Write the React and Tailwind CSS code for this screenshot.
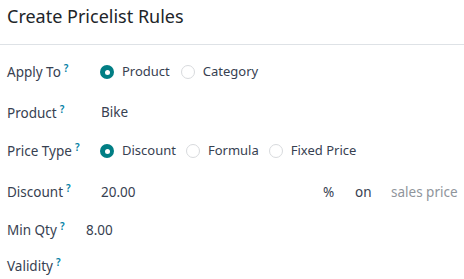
import React from "react";

function Q() {
  return <span className="ml-[3px] text-[10px] leading-[12px] font-semibold text-[#0180a5]">?</span>;
}

function Label({ w, children }) {
  return (
    <div className={`${w} shrink-0 flex items-start`}>
      <span className="leading-[20px]">{children}</span>
      <Q />
    </div>
  );
}

function Radio({ checked, label }) {
  return (
    <div className="flex items-center">
      {checked ? (
        <span className="w-[14px] h-[14px] rounded-full bg-[#017e84] flex items-center justify-center">
          <span className="w-[5px] h-[5px] rounded-full bg-white" />
        </span>
      ) : (
        <span className="w-[14px] h-[14px] rounded-full border border-[#d8dadd] bg-white" />
      )}
      <span className="ml-[8px] text-[13px]">{label}</span>
    </div>
  );
}

export default function App() {
  return (
    <div className="w-[464px] h-[279px] bg-white text-[#374151] text-[13.5px] overflow-hidden" style={{ fontFamily: '"Noto Sans", sans-serif' }}>
      <div className="h-[45px] border-b border-[#dee2e6] pl-[7px] pt-[4px] flex items-start">
        <h1 className="text-[18px] text-[#212529] leading-[24px]">Create Pricelist Rules</h1>
      </div>
      <div className="pl-[7px] pt-[7px]">
        <div className="flex items-center h-[40px]">
          <Label w="w-[93px]">Apply To</Label>
          <div className="flex items-center gap-[11px]">
            <Radio checked label="Product" />
            <Radio label="Category" />
          </div>
        </div>
        <div className="flex items-center h-[41px]">
          <Label w="w-[94px]">Product</Label>
          <span>Bike</span>
        </div>
        <div className="flex items-center h-[36px]">
          <Label w="w-[93px]">Price Type</Label>
          <div className="flex items-center gap-[10px]">
            <Radio checked label="Discount" />
            <Radio label="Formula" />
            <Radio label="Fixed Price" />
          </div>
        </div>
        <div className="flex items-center h-[46px]">
          <Label w="w-[94px]">Discount</Label>
          <span className="w-[222px]">20.00</span>
          <span className="w-[32px]">%</span>
          <span className="w-[36px]">on</span>
          <span className="text-[#8f959c]">sales price</span>
        </div>
        <div className="flex items-center h-[30px]">
          <Label w="w-[79px]">Min Qty</Label>
          <span>8.00</span>
        </div>
        <div className="flex items-center h-[42px]">
          <Label w="w-[93px]">Validity</Label>
        </div>
      </div>
    </div>
  );
}
